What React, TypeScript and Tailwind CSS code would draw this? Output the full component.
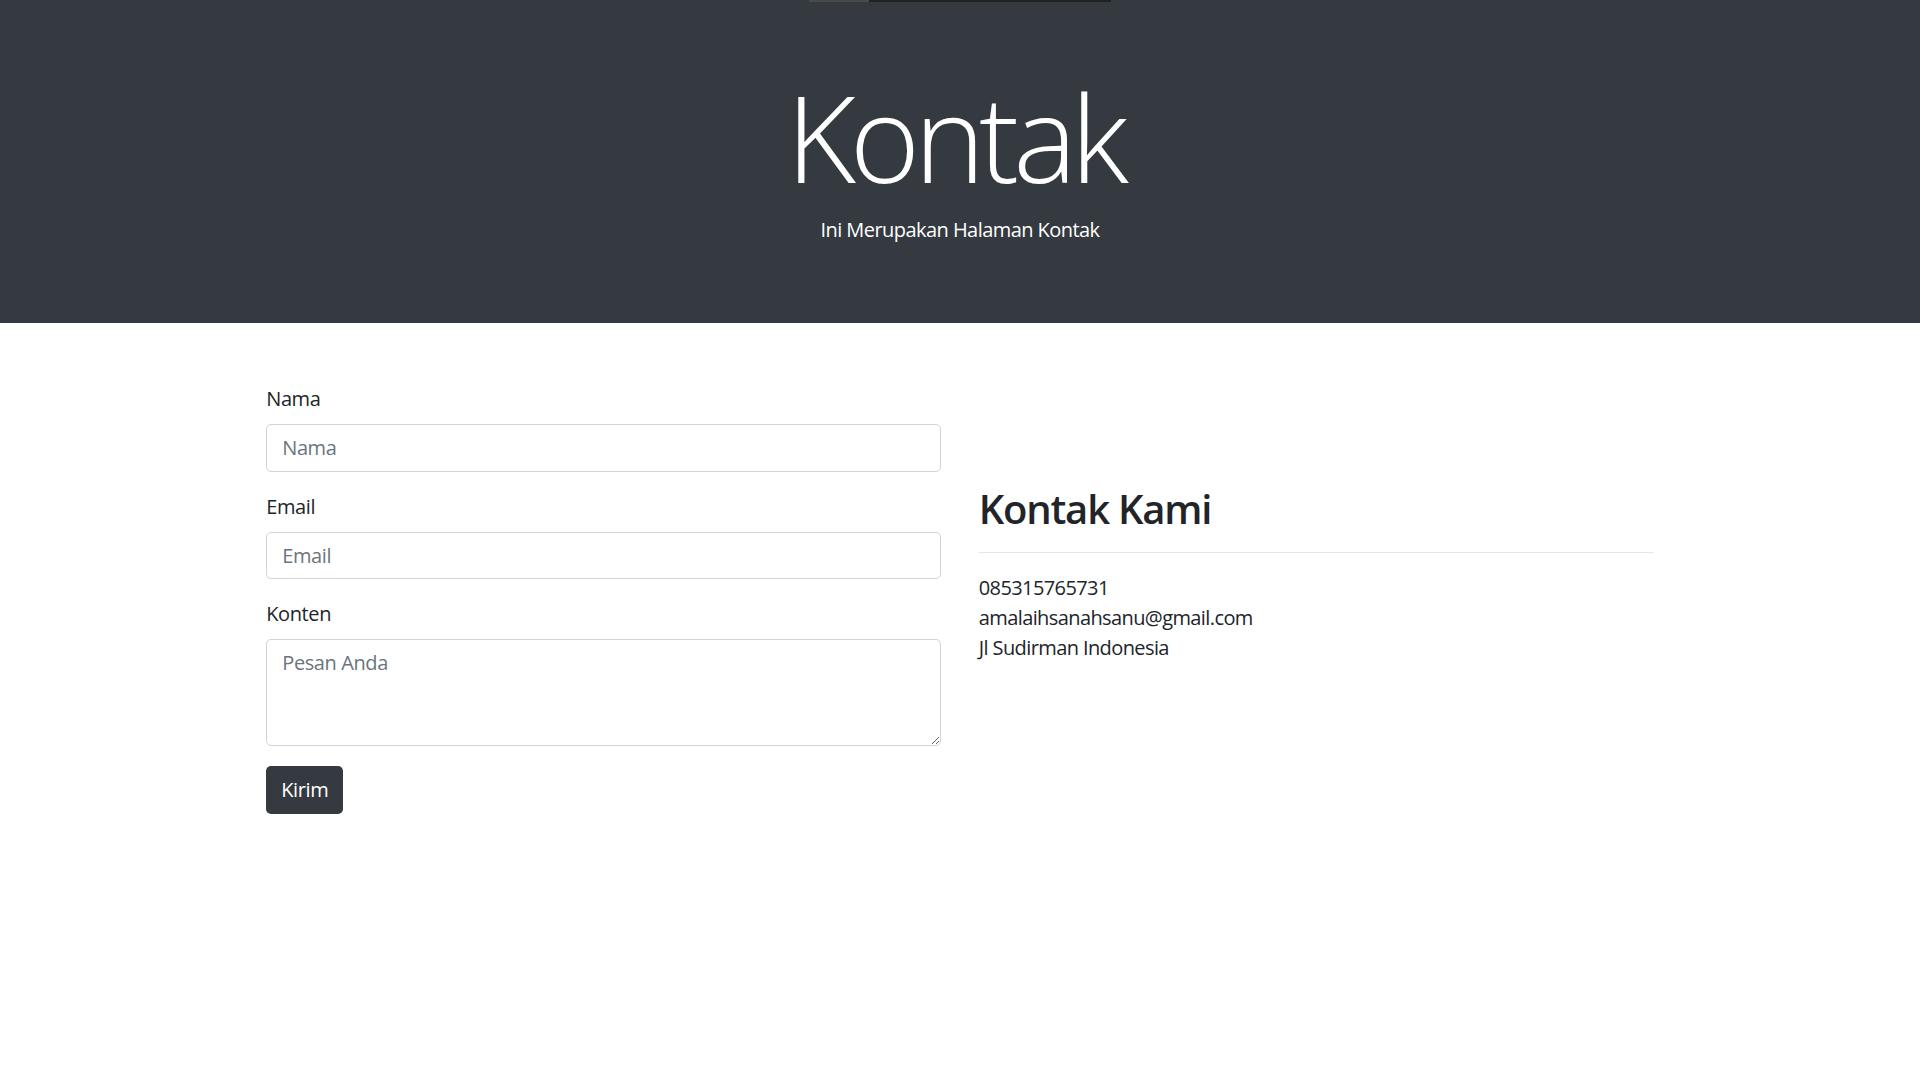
import React from "react";

export default function App() {
  const font = { fontFamily: '"Open Sans", "Noto Sans", sans-serif' };
  return (
    <div className="min-h-[1080px] bg-white text-[#212529]" style={font}>
      <header className="h-[323px] bg-[#343a40] flex flex-col items-center">
        <div className="h-[2px] w-full flex justify-center">
          <div className="w-[60px] h-[2px] bg-[#4a4a4a]" />
          <div className="w-[242px] h-[2px] bg-[#222222]" />
        </div>
        <h1 className="mt-[63px] mr-[11px] text-[120px] leading-[144px] font-light text-white tracking-[-6px]">
          Kontak
        </h1>
        <p className="mt-[6px] text-[20px] leading-[30px] text-white tracking-[-0.55px]">
          Ini Merupakan Halaman Kontak
        </p>
      </header>

      <main className="w-[1387.5px] mx-auto pt-[61px] grid grid-cols-2 gap-x-[37.5px] items-start">
        <form className="flex flex-col tracking-[-0.4px]">
          <label className="text-[20px] leading-[30px] mb-[10px]">Nama</label>
          <input
            type="text"
            placeholder="Nama"
            className="h-[47.5px] w-full border border-[#ced4da] rounded-[5px] px-[15px] text-[20px] leading-[30px] placeholder:text-[#6c757d] outline-none"
          />
          <label className="mt-[20px] text-[20px] leading-[30px] mb-[10px]">Email</label>
          <input
            type="email"
            placeholder="Email"
            className="h-[47.5px] w-full border border-[#ced4da] rounded-[5px] px-[15px] text-[20px] leading-[30px] placeholder:text-[#6c757d] outline-none"
          />
          <label className="mt-[20px] text-[20px] leading-[30px] mb-[10px]">Konten</label>
          <textarea
            placeholder="Pesan Anda"
            rows={3}
            className="h-[107px] w-full border border-[#ced4da] rounded-[5px] px-[15px] py-[7.5px] text-[20px] leading-[30px] placeholder:text-[#6c757d] outline-none"
          />
          <div className="mt-[20px]">
            <button
              type="button"
              className="h-[47.5px] px-[15px] rounded-[5px] bg-[#343a40] text-white text-[20px] leading-[30px]"
            >
              Kirim
            </button>
          </div>
        </form>

        <section className="pt-[101px] tracking-[-0.6px]">
          <h2 className="text-[40px] leading-[48px] font-semibold mb-[10px] tracking-[-1.2px]">Kontak Kami</h2>
          <hr className="mt-[19px] mb-[20px] border-0 border-t border-[#e6e6e6]" />
          <p className="text-[20px] leading-[30px]">085315765731</p>
          <p className="text-[20px] leading-[30px]">amalaihsanahsanu@gmail.com</p>
          <p className="text-[20px] leading-[30px]">Jl Sudirman Indonesia</p>
        </section>
      </main>
    </div>
  );
}
